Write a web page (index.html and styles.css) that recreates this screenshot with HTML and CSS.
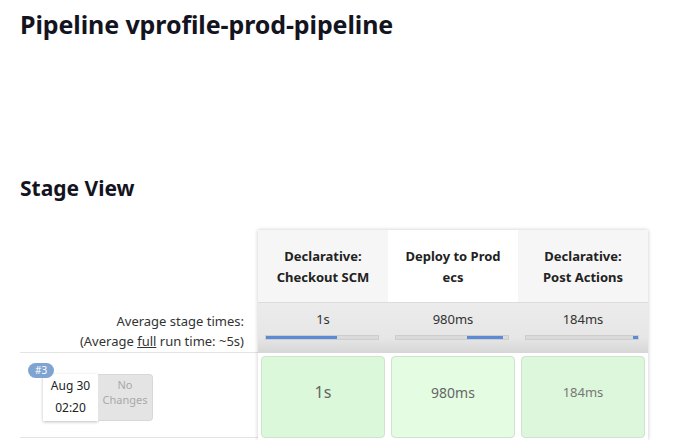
FILE: index.html
```html
<!DOCTYPE html>
<html>
<head>
<meta charset="utf-8">
<link rel="stylesheet" href="styles.css">
</head>
<body>
<h1 class="title">Pipeline vprofile-prod-pipeline</h1>
<h2 class="subtitle">Stage View</h2>
<div class="stage-view">
  <div class="left-col">
    <div class="left-head"></div>
    <div class="avg-label">
      <div>Average stage times:</div>
      <div>(Average <u>full</u> run time: ~5s)</div>
    </div>
    <div class="build-row">
      <div class="build-card">
        <span class="badge">#3</span>
        <div class="date-box">
          <div>Aug 30</div>
          <div>02:20</div>
        </div>
        <div class="changes">No<br>Changes</div>
      </div>
    </div>
  </div>
  <div class="stages">
    <div class="stage-col">
      <div class="stage-head gray">Declarative:<br>Checkout SCM</div>
      <div class="stage-avg">
        <div class="avg-time">1s</div>
        <div class="bar"><div class="fill" style="left:0;width:71px"></div></div>
      </div>
      <div class="stage-cell-wrap"><div class="stage-cell c1">1s</div></div>
    </div>
    <div class="stage-col">
      <div class="stage-head">Deploy to Prod<br>ecs</div>
      <div class="stage-avg">
        <div class="avg-time">980ms</div>
        <div class="bar"><div class="fill" style="left:71px;width:36px"></div></div>
      </div>
      <div class="stage-cell-wrap"><div class="stage-cell c2">980ms</div></div>
    </div>
    <div class="stage-col">
      <div class="stage-head gray">Declarative:<br>Post Actions</div>
      <div class="stage-avg">
        <div class="avg-time">184ms</div>
        <div class="bar"><div class="fill" style="left:107px;width:5px"></div></div>
      </div>
      <div class="stage-cell-wrap"><div class="stage-cell c3">184ms</div></div>
    </div>
  </div>
</div>
</body>
</html>
```

FILE: styles.css
```css
html, body {
  margin: 0;
  padding: 0;
  background: #fff;
  font-family: "Noto Sans", "Open Sans", sans-serif;
  color: #14141f;
}
body {
  padding: 0 0 0 20px;
}
.title {
  margin: 0;
  padding-top: 8px;
  font-size: 25px;
  line-height: 32px;
  font-weight: 700;
  letter-spacing: -0.1px;
}
.subtitle {
  margin: 134px 0 0;
  font-size: 21px;
  line-height: 28px;
  font-weight: 700;
}
.stage-view {
  display: flex;
  margin-top: 28px;
}
.left-col {
  width: 238px;
  display: flex;
  flex-direction: column;
}
.left-head {
  height: 72px;
}
.avg-label {
  height: 51px;
  box-sizing: border-box;
  padding: 9px 14px 0 0;
  text-align: right;
  font-size: 13px;
  line-height: 20px;
  color: #333;
  border-bottom: 1px solid #e4e4e4;
}
.build-row {
  height: 85px;
  box-sizing: border-box;
  border-bottom: 1px solid #e4e4e4;
  padding: 21px 0 0 23px;
}
.build-card {
  position: relative;
  display: flex;
  width: 110px;
  height: 47px;
}
.badge {
  position: absolute;
  left: -15px;
  top: -11px;
  background: #7fa4d2;
  color: #fff;
  font-size: 10px;
  line-height: 15px;
  padding: 0 7px;
  border-radius: 8px;
  z-index: 2;
}
.date-box {
  width: 55px;
  background: #fff;
  box-shadow: 0 1px 3px rgba(0,0,0,0.25);
  font-size: 12px;
  line-height: 22px;
  text-align: center;
  color: #222;
  padding-top: 1px;
  box-sizing: border-box;
}
.changes {
  width: 55px;
  background: #e4e4e4;
  border: 1px solid #d8d8d8;
  border-left: none;
  border-radius: 0 4px 4px 0;
  color: #a9a9a9;
  font-size: 11px;
  line-height: 15px;
  text-align: center;
  padding-top: 2px;
  box-sizing: border-box;
}
.stages {
  display: flex;
  box-shadow: 0 0 4px rgba(0,0,0,0.22);
  height: 210px;
}
.stage-col {
  width: 130px;
  display: flex;
  flex-direction: column;
}
.stage-head {
  height: 72px;
  box-sizing: border-box;
  padding-top: 16px;
  text-align: center;
  font-size: 13px;
  line-height: 21px;
  font-weight: 700;
  color: #222;
  background: #fff;
}
.stage-head.gray {
  background: #f6f6f6;
}
.stage-avg {
  height: 51px;
  box-sizing: border-box;
  background: linear-gradient(#ececec, #e6e6e6 70%, #d6d6d6);
  border-top: 1px solid #dcdcdc;
  padding-top: 7px;
  text-align: center;
}
.avg-time {
  font-size: 13px;
  line-height: 18px;
  color: #333;
}
.bar {
  position: relative;
  margin: 7px 0 0 7px;
  width: 112px;
  height: 3px;
  background: #dadada;
  border: 1px solid #cdcdcd;
  box-sizing: content-box;
}
.fill {
  position: absolute;
  top: 0;
  height: 3px;
  background: #5b8ad6;
}
.stage-cell-wrap {
  flex: 1;
  padding: 3px 3px 0;
  background: #fff;
}
.stage-cell {
  height: 82px;
  box-sizing: border-box;
  border: 1px solid #cfe3cd;
  border-radius: 4px;
  display: flex;
  align-items: center;
  justify-content: center;
  padding-bottom: 10px;
  color: #666;
}
.c1 { background: #dcf8db; font-size: 16px; }
.c2 { background: #e3fce2; font-size: 14px; }
.c3 { background: #dcf7db; font-size: 13px; color: #777; }
```
